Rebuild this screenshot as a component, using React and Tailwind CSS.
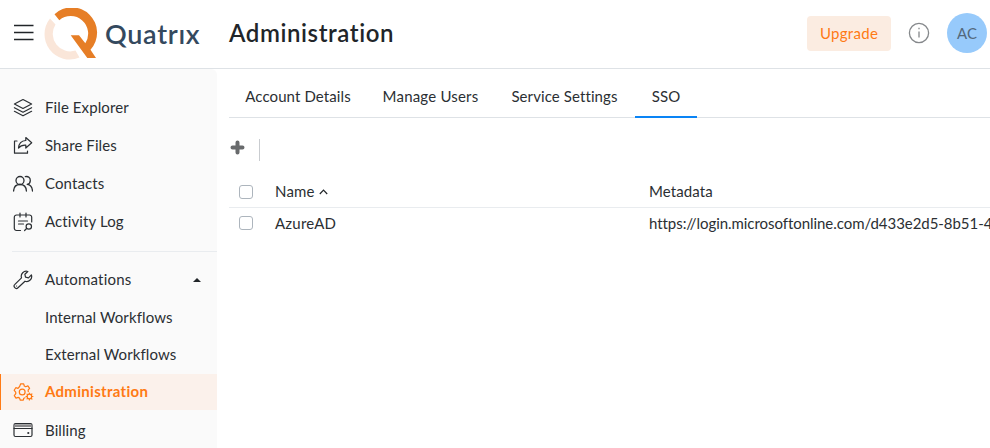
import React from "react";

const iconProps = {
  fill: "none",
  stroke: "currentColor",
  strokeWidth: 1.2,
  strokeLinecap: "round",
  strokeLinejoin: "round",
  width: 20,
  height: 20,
  viewBox: "0 0 20 20",
};

const Layers = () => (
  <svg {...iconProps}>
    <path d="M10 1.500 18.600 6 10 10.500 1.400 6Z" />
    <path d="M1.400 9.700 10 14.200l8.600-4.500M1.400 13.300 10 17.800l8.600-4.500" />
  </svg>
);

const Share = () => (
  <svg {...iconProps}>
    <path d="M4 5H1.500v12.200h13V15" />
    <path d="M12.800 1.500 18.700 6.800 12.800 12V9.200C9.300 9 7.300 9.800 5.500 12 5.800 7.800 8.500 4.800 12.800 4.500Z" />
  </svg>
);

const Contacts = () => (
  <svg {...iconProps} strokeWidth="1.3">
    <circle cx="7" cy="6.500" r="4" />
    <path d="M.6 17c.2-4 2.700-6.500 6.400-6.500s6.200 2.500 6.400 6.500M12.300 2.700c3-.8 5 1.200 5 3.700 0 2-1.200 3.500-3.100 4 2.900.4 5 2.800 5.300 6.600" />
  </svg>
);

const Activity = () => (
  <svg {...iconProps}>
    <path d="M7.500 18.500H3.500a2.200 2.200 0 0 1-2.200-2.200V5.200A2.200 2.200 0 0 1 3.500 3h13a2.200 2.200 0 0 1 2.200 2.200V10M7 1v4M13 1v4M5.500 9h9M5.500 12h5" />
    <circle cx="15.800" cy="14.500" r="2.700" />
    <path d="m13.600 16.500-2 2" />
  </svg>
);

const Wrench = () => (
  <svg {...iconProps}>
    <path d="M14.800 1.500a5 5 0 0 0-6.300 6.300L1.900 14.400a2.200 2.200 0 0 0 3.100 3.400L12 11.200a5 5 0 0 0 6.400-6.300l-2.900 2.900-3-.7-.6-2.800Z" />
    <path d="M3.500 16h.1" />
  </svg>
);

const Gears = () => (
  <svg {...iconProps} width="21" viewBox="0 0 21 20">
    <path d="M7.700 1.800h3l.6 2.200 1.400.7 2.200-.8 1.700 2.500-1.500 1.800.2 1.500M12 15.800l-1.200.4-.5 2h-3l-.7-2.100-1.400-.7-2.200.7-1.700-2.500 1.500-1.900-.1-1.600L1.200 8.300 2.800 5.700 5 6.300 6.600 4.500 7.700 1.800" />
    <circle cx="9.200" cy="10" r="2.900" />
    <circle cx="16.400" cy="14.500" r="2.300" />
    <path d="M16.400 11v1M16.400 17v1M13 14.500h1M18.900 14.500h1M14 12.100l.6.6M18.200 16.300l.7.7M14 16.900l.6-.6M18.200 12.700l.7-.7" />
  </svg>
);

const Card = () => (
  <svg {...iconProps}>
    <rect x="1" y="3.700" width="18" height="12.800" rx="1.500" />
    <path d="M1.500 5.800h17" stroke="#8a8a8c" strokeWidth="2.600" />
    <path d="M1 8.500h18" />
    <circle cx="15.300" cy="13" r="1.100" fill="currentColor" stroke="none" />
  </svg>
);

function NavItem({ icon, label, className = "", labelClass = "tracking-[0.1px]", children }) {
  return (
    <a className={`flex items-center pl-[13px] ${className}`}>
      <span className="w-8 shrink-0">{icon}</span>
      <span className={`mb-[2px] whitespace-nowrap ${labelClass}`}>{label}</span>
      {children}
    </a>
  );
}

const tabs = [
  { label: "Account Details", box: "w-[138px] tracking-[0.1px]" },
  { label: "Manage Users", box: "w-[127px] tracking-[0.2px]" },
  { label: "Service Settings", box: "w-[141px] tracking-[0.1px]" },
  { label: "SSO", box: "w-[62px] tracking-[0.1px]", active: true },
];

const Checkbox = () => (
  <span className="ml-[10px] mr-[22px] block size-[14px] shrink-0 rounded-[3px] border border-[#adb5bd] bg-white" />
);

export default function App() {
  return (
    <div className="flex h-[448px] w-[990px] flex-col overflow-hidden bg-white font-['Lato',sans-serif] text-[15px] leading-5 text-[#2b2f33] [font-variant-ligatures:none]">
      <header className="flex h-[69px] shrink-0 items-center border-b border-[#dee2e6] pb-[2px]">
        <svg className="ml-[13px] shrink-0" width="21" height="18" viewBox="0 0 21 18" fill="none" stroke="#212529" strokeWidth="1.500">
          <path d="M1 1.500h19.500M1 8.500h19.500M1 15.500h19.500" />
        </svg>
        <svg className="ml-[10px] mt-[2px] shrink-0" width="54" height="52" viewBox="0 0 54 52">
          <path d="M6 10.500A25.300 25.300 0 0 0 35.500 49.600L31.500 42.600A17.500 17.500 0 0 1 11.500 16.500Z" fill="#fae6d9" />
          <path d="M10.500 6.200A25.300 25.300 0 0 1 46.500 41.700L52 50H43.300L26.700 27.300H35L41.300 35.200A17.500 17.500 0 0 0 15.300 12.300Z" fill="#e67e26" />
        </svg>
        <span className="ml-[7px] mt-[2px] w-[124px] whitespace-nowrap text-[27px] font-semibold leading-8 tracking-[0.700px] text-[#34495e]">Quatrıx</span>
        <h1 className="whitespace-nowrap text-[24px] font-semibold leading-8 tracking-[0.600px] text-[#212529]">Administration</h1>
        <button className="ml-auto h-[35px] w-[84px] rounded-[4px] bg-[#fbece1] pb-px tracking-[0.3px] text-[#ff7a14]">Upgrade</button>
        <svg className="ml-[17px]" width="22" height="22" viewBox="0 0 22 22" fill="none" stroke="#85888b" strokeWidth="1.300">
          <circle cx="11" cy="11" r="9.600" />
          <path d="M11 9.500v6M11 5.800v1.500" />
        </svg>
        <div className="ml-[17px] mr-[3px] flex size-[40px] items-center justify-center rounded-full bg-[#97cafb] pb-px text-[#53687c]">AC</div>
      </header>

      <div className="flex min-h-0 flex-1">
        <nav className="flex w-[217px] shrink-0 flex-col rounded-tr-md bg-[#fafafa] pt-5">
          <NavItem className="h-[38px]" icon={<Layers />} label="File Explorer" />
          <NavItem className="h-[38px]" icon={<Share />} label="Share Files" />
          <NavItem className="h-[38px]" icon={<Contacts />} label="Contacts" />
          <NavItem className="h-[38px]" icon={<Activity />} label="Activity Log" />
          <div className="mb-[9px] ml-3 mt-[10px] h-px bg-[#e9ecef]" />
          <NavItem className="h-[38px]" icon={<Wrench />} label="Automations" labelClass="tracking-[0.2px]">
            <span className="ml-auto mr-4 border-x-4 border-b-4 border-x-transparent border-b-[#212529]" />
          </NavItem>
          <NavItem className="h-[38px]" label="Internal Workflows" />
          <NavItem className="mb-px h-[36px]" label="External Workflows" />
          <NavItem className="h-[36px] border-l border-[#ff7a14] bg-[#fbf1eb] pl-[12px]! font-bold text-[#ff7a14]" labelClass="tracking-[0.3px]" icon={<Gears />} label="Administration" />
          <NavItem className="h-[38px] pt-px" icon={<Card />} label="Billing" labelClass="tracking-[0.1px] mb-0!" />
        </nav>

        <main className="min-w-0 flex-1 pl-3">
          <div className="flex h-[49px] border-b border-[#dee2e6]">
            {tabs.map((t) => (
              <div
                key={t.label}
                className={`-mb-px flex shrink-0 items-center justify-center whitespace-nowrap pt-[7px] ${t.box} ${t.active ? "border-b-2 border-[#0a84f5]" : "border-b-2 border-transparent"}`}
              >
                {t.label}
              </div>
            ))}
          </div>

          <div className="flex h-[58px] items-center pt-[5px]">
            <svg className="mb-1 ml-[1px]" width="15" height="15" viewBox="0 0 15 15" stroke="#686a6c" strokeWidth="4" strokeLinecap="round">
              <path d="M7.500 2.500v10M2.500 7.500h10" />
            </svg>
            <span className="ml-[14px] h-[22px] w-px bg-[#c9ccd0]" />
          </div>

          <div className="flex h-[32px] items-center border-b border-[#e9ecef]">
            <Checkbox />
            <div className="flex w-[374px] shrink-0 items-center pb-px">
              <span className="tracking-[0.2px]">Name</span>
              <svg className="ml-1 mt-px" width="9" height="6" viewBox="0 0 9 6" fill="none" stroke="#212529" strokeWidth="1.200">
                <path d="M.8 5 4.500 1.200 8.200 5" />
              </svg>
            </div>
            <span className="pb-px tracking-[0.1px]">Metadata</span>
          </div>
          <div className="flex h-[30px] items-center">
            <Checkbox />
            <span className="w-[374px] shrink-0 tracking-[0.2px]">AzureAD</span>
            <span className="whitespace-nowrap tracking-[-0.05px]">https://login.microsoftonline.com/d433e2d5-8b51-4</span>
          </div>
        </main>
      </div>
    </div>
  );
}
